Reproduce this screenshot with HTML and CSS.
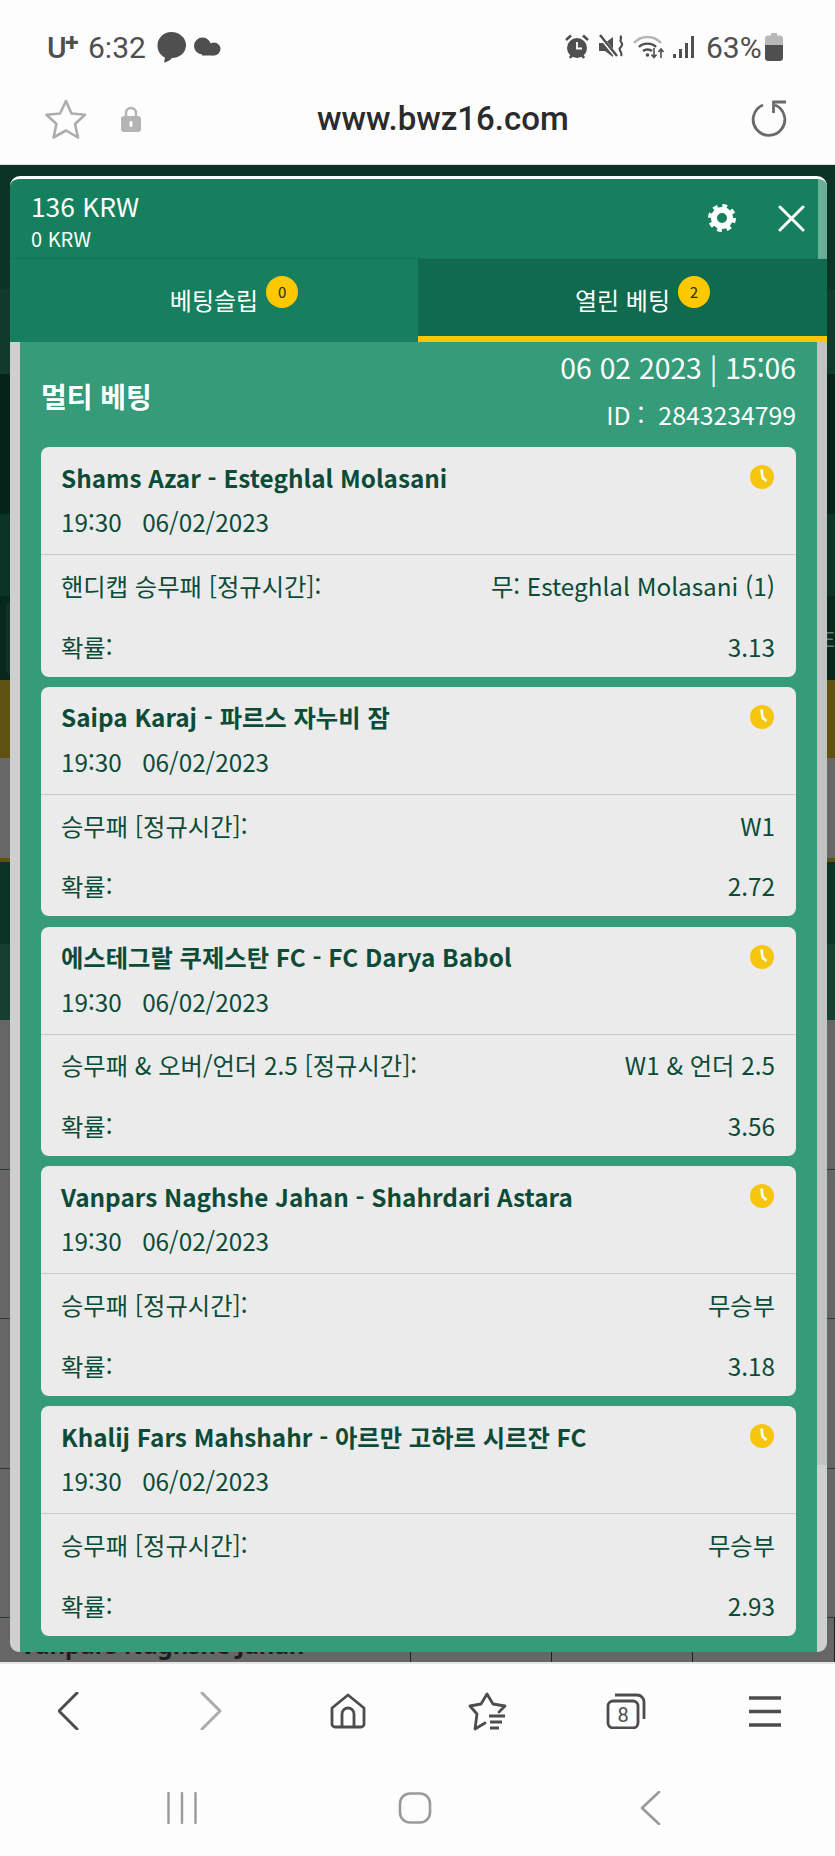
FILE: index.html
```html
<!DOCTYPE html>
<html lang="ko">
<head>
  <meta charset="UTF-8">
  <title>www.bwz16.com</title>
  <link rel="stylesheet" href="styles.css">
</head>
<body>
  <div class="status-bar">
    <div class="status-left">
      <span class="carrier">U<span class="carrier-plus">+</span></span>
      <span class="clock-text">6:32</span>
      <svg width="37" height="34" viewBox="0 0 37 34"><path d="M14.5 2C6.5 2 .5 8 .5 15.5c0 5.500 3 10 7.500 12l-1 5c3-.5 6-2 8-4.500 8 0 14-5.500 14-13C29 8 22.5 2 14.5 2z" fill="#4f4f4f"/></svg>
      <svg width="27" height="22" viewBox="0 0 27 22"><circle cx="8.5" cy="10" r="8.5" fill="#4f4f4f"/><circle cx="20" cy="13" r="6.5" fill="#4f4f4f"/><rect x="8" y="12" width="12" height="7.5" fill="#4f4f4f"/></svg>
    </div>
    <div class="status-right">
      <svg width="34" height="26" viewBox="0 0 34 26">
        <circle cx="12" cy="14" r="10" fill="#4f4f4f"/>
        <path d="M1 6l5-4.500M23 6l-5-4.500M5 24l2-3M19 24l-2-3" stroke="#4f4f4f" stroke-width="2.6" fill="none"/>
        <path d="M12 8v6.500h5" stroke="#fff" stroke-width="1.8" fill="none"/>
      </svg>
      <svg width="34" height="26" viewBox="0 0 34 26">
        <path d="M0 9h6l8-6v20l-8-6H0z" fill="#4f4f4f"/>
        <path d="M1 2l17 21" stroke="#fff" stroke-width="4"/>
        <path d="M1 1l17 21" stroke="#4f4f4f" stroke-width="2.4"/>
        <path d="M21 2c3 2-1 4 1 6s1 4-1 6 3 4 1 8" stroke="#4f4f4f" stroke-width="2.2" fill="none"/>
      </svg>
      <svg width="38" height="26" viewBox="0 0 38 26">
        <path d="M1 9c7-8 20-8 27 0" stroke="#b4b4b4" stroke-width="2.4" fill="none"/>
        <path d="M6 13c4-4.500 13-4.500 17 0M10 17c2.500-2 6.500-2 9 0" stroke="#4f4f4f" stroke-width="2.4" fill="none"/>
        <circle cx="14.5" cy="21" r="1.8" fill="#4f4f4f"/>
        <path d="M21 14v9M18.5 20.5l2.500 3 2.500-3M28 24v-9M25.5 18l2.500-3 2.500 3" stroke="#4f4f4f" stroke-width="1.6" fill="none"/>
      </svg>
      <svg width="35" height="26" viewBox="0 0 35 26">
        <path d="M2 20h3v4H2zM8 15h3v9H8zM14 9h3v15h-3zM20 2h3v22h-3z" fill="#4f4f4f"/>
      </svg>
      <span class="battery-text">63%</span>
      <svg width="18" height="28" viewBox="0 0 18 28">
        <path d="M6 0h6v2.500h3c1.500 0 3 1.200 3 3V12H0V5.500c0-1.800 1.500-3 3-3h3z" fill="#b8b8b8"/>
        <path d="M0 12h18v13c0 1.800-1.500 3-3 3H3c-1.500 0-3-1.200-3-3z" fill="#4f4f4f"/>
      </svg>
    </div>
  </div>

  <div class="url-bar">
    <div class="url-left">
      <svg width="42" height="40" viewBox="0 0 42 40"><path d="M21 2l5.500 12.500 13.500 1.300-10 9.200 3 13.500L21 31.500 8.500 38.500 11.500 25l-10-9.200 13.500-1.300z" fill="none" stroke="#adadad" stroke-width="2.6" stroke-linejoin="round"/></svg>
      <svg width="20" height="26" viewBox="0 0 20 26"><path d="M5 11V7a5 5 0 0 1 10 0v4" fill="none" stroke="#b4b4b4" stroke-width="2.4"/><rect y="10" width="20" height="16" rx="3" fill="#b4b4b4"/><rect x="8.5" y="15" width="3" height="6" rx="1.5" fill="#fff"/></svg>
    </div>
    <div class="url-text">www.bwz16.com</div>
    <svg class="reload" width="38" height="37" viewBox="0 0 38 37"><path d="M13 5A15.800 15.800 0 1 0 25 5" fill="none" stroke="#6a6a6a" stroke-width="2.8"/><path d="M36 2H23.500v11" fill="none" stroke="#6a6a6a" stroke-width="2.8"/></svg>
  </div>

  <div class="viewport">
    <div class="band band-a"></div>
    <div class="band band-b"></div>
    <div class="band band-c"></div>
    <div class="band band-d"></div>
    <div class="band band-e"><div class="band-box"></div><span class="band-letter">E</span></div>
    <div class="band band-f"></div>
    <div class="band band-g"></div>
    <div class="band band-h"></div>
    <div class="band band-i"></div>
    <div class="band band-j"></div>
    <div class="bg-row"></div>
    <div class="bg-row"></div>
    <div class="bg-row"></div>
    <div class="bg-row"></div>
    <div class="bg-row bg-row-last">
      <div class="bg-cell">Vanpars Naghshe Jahan</div>
      <div class="bg-cell"></div>
      <div class="bg-cell"></div>
      <div class="bg-cell"></div>
    </div>

    <div class="modal">
      <div class="modal-top">
        <div class="modal-head">
          <div>
            <div class="balance">136 KRW</div>
            <div class="bonus">0 KRW</div>
          </div>
          <div class="head-icons">
            <svg width="28" height="28" viewBox="0 0 28 28">
              <circle cx="14" cy="14" r="8" fill="none" stroke="#fff" stroke-width="6"/>
              <circle cx="14" cy="14" r="11.5" fill="none" stroke="#fff" stroke-width="5" stroke-dasharray="4.5 4.53"/>
            </svg>
            <svg width="27" height="27" viewBox="0 0 27 27"><path d="M2 2l23 23M25 2L2 25" stroke="#fff" stroke-width="3" stroke-linecap="round"/></svg>
          </div>
        </div>
        <div class="tabs">
          <div class="tab"><span class="tab-label">베팅슬립<span class="tab-badge">0</span></span></div>
          <div class="tab tab-active"><span class="tab-label">열린 베팅<span class="tab-badge">2</span></span></div>
        </div>
      </div>
      <div class="scroll-thumb"></div>
      <div class="content">
        <div class="content-head">
          <h2>멀티 베팅</h2>
          <div class="bet-info">
            <div class="bet-date">06 02 2023 | 15:06</div>
            <div class="bet-id">ID :&nbsp; 2843234799</div>
          </div>
        </div>

        <div class="card">
          <div class="card-top">
            <div class="card-title"><span>Shams Azar - Esteghlal Molasani</span>
              <svg class="clock" width="24" height="24" viewBox="0 0 24 24"><circle cx="12" cy="12" r="12" fill="#f5c60d"/><path d="M11.5 4.5l1 8 4 3.500" fill="none" stroke="#fff" stroke-width="2.6"/></svg>
            </div>
            <div class="card-time">19:30&nbsp;&nbsp; 06/02/2023</div>
          </div>
          <div class="card-row"><span>핸디캡 승무패 [정규시간]:</span><span>무: Esteghlal Molasani (1)</span></div>
          <div class="card-row"><span>확률:</span><span>3.13</span></div>
        </div>

        <div class="card">
          <div class="card-top">
            <div class="card-title"><span>Saipa Karaj - 파르스 자누비 잠</span>
              <svg class="clock" width="24" height="24" viewBox="0 0 24 24"><circle cx="12" cy="12" r="12" fill="#f5c60d"/><path d="M11.5 4.5l1 8 4 3.500" fill="none" stroke="#fff" stroke-width="2.6"/></svg>
            </div>
            <div class="card-time">19:30&nbsp;&nbsp; 06/02/2023</div>
          </div>
          <div class="card-row"><span>승무패 [정규시간]:</span><span>W1</span></div>
          <div class="card-row"><span>확률:</span><span>2.72</span></div>
        </div>

        <div class="card">
          <div class="card-top">
            <div class="card-title"><span>에스테그랄 쿠제스탄 FC - FC Darya Babol</span>
              <svg class="clock" width="24" height="24" viewBox="0 0 24 24"><circle cx="12" cy="12" r="12" fill="#f5c60d"/><path d="M11.5 4.5l1 8 4 3.500" fill="none" stroke="#fff" stroke-width="2.6"/></svg>
            </div>
            <div class="card-time">19:30&nbsp;&nbsp; 06/02/2023</div>
          </div>
          <div class="card-row"><span>승무패 &amp; 오버/언더 2.5 [정규시간]:</span><span>W1 &amp; 언더 2.5</span></div>
          <div class="card-row"><span>확률:</span><span>3.56</span></div>
        </div>

        <div class="card">
          <div class="card-top">
            <div class="card-title"><span>Vanpars Naghshe Jahan - Shahrdari Astara</span>
              <svg class="clock" width="24" height="24" viewBox="0 0 24 24"><circle cx="12" cy="12" r="12" fill="#f5c60d"/><path d="M11.5 4.5l1 8 4 3.500" fill="none" stroke="#fff" stroke-width="2.6"/></svg>
            </div>
            <div class="card-time">19:30&nbsp;&nbsp; 06/02/2023</div>
          </div>
          <div class="card-row"><span>승무패 [정규시간]:</span><span>무승부</span></div>
          <div class="card-row"><span>확률:</span><span>3.18</span></div>
        </div>

        <div class="card">
          <div class="card-top">
            <div class="card-title"><span>Khalij Fars Mahshahr - 아르만 고하르 시르잔 FC</span>
              <svg class="clock" width="24" height="24" viewBox="0 0 24 24"><circle cx="12" cy="12" r="12" fill="#f5c60d"/><path d="M11.5 4.5l1 8 4 3.500" fill="none" stroke="#fff" stroke-width="2.6"/></svg>
            </div>
            <div class="card-time">19:30&nbsp;&nbsp; 06/02/2023</div>
          </div>
          <div class="card-row"><span>승무패 [정규시간]:</span><span>무승부</span></div>
          <div class="card-row"><span>확률:</span><span>2.93</span></div>
        </div>
      </div>
    </div>
  </div>

  <div class="nav-bar">
    <svg width="24" height="38" viewBox="0 0 24 38"><path d="M19 1L1 19l18 18" fill="none" stroke="#4d4d4d" stroke-width="3" stroke-linecap="round" stroke-linejoin="round"/></svg>
    <svg class="nav-forward" width="24" height="38" viewBox="0 0 24 38"><path d="M3 1l18 18L3 37" fill="none" stroke="#ababab" stroke-width="3" stroke-linecap="round" stroke-linejoin="round"/></svg>
    <svg width="36" height="36" viewBox="0 0 36 36"><path d="M2 15L18 2l16 13v16a3 3 0 0 1-3 3H5a3 3 0 0 1-3-3z" fill="none" stroke="#4d4d4d" stroke-width="2.8" stroke-linejoin="round"/><path d="M12 34V21a6 6 0 0 1 12 0v13" fill="none" stroke="#4d4d4d" stroke-width="2.8"/></svg>
    <svg width="40" height="40" viewBox="0 0 40 40"><path d="M32 21l6-6-12-2-6-10-6 10-11 2 7 8-2 15 10-6" fill="none" stroke="#4d4d4d" stroke-width="2.8" stroke-linejoin="round" stroke-linecap="round"/><path d="M22 25h16M23 31h12M23 37h9" stroke="#4d4d4d" stroke-width="3"/></svg>
    <svg width="40" height="36" viewBox="0 0 40 36"><rect x="2" y="8" width="30" height="27" rx="5" fill="none" stroke="#4d4d4d" stroke-width="2.8"/><path d="M9 2h22a7 7 0 0 1 7 7v17" fill="none" stroke="#4d4d4d" stroke-width="2.8"/><text x="17" y="29" text-anchor="middle" class="tab-count">8</text></svg>
    <svg width="32" height="33" viewBox="0 0 32 33"><path d="M0 3h32M0 16.5h32M0 30h32" stroke="#4d4d4d" stroke-width="3.4"/></svg>
  </div>

  <div class="system-bar">
    <svg width="40" height="32" viewBox="0 0 40 32"><path d="M6.5 1v30M20 1v30M33.5 1v30" stroke="#9a9a9a" stroke-width="2.4" stroke-linecap="round"/></svg>
    <svg width="40" height="32" viewBox="0 0 40 32"><rect x="4" y="1.5" width="30" height="29" rx="10" fill="none" stroke="#9a9a9a" stroke-width="2.6"/></svg>
    <svg width="40" height="34" viewBox="0 0 40 34"><path d="M29 1L12 17l17 16" fill="none" stroke="#9a9a9a" stroke-width="2.6" stroke-linecap="round" stroke-linejoin="round"/></svg>
  </div>
</body>
</html>
```

FILE: styles.css
```css
* {
  box-sizing: border-box;
  margin: 0;
  padding: 0;
}

body {
  width: 835px;
  height: 1856px;
  overflow: hidden;
  background: #fdfdfd;
  font-family: "Noto Sans CJK KR", "Noto Sans", sans-serif;
}

svg {
  display: block;
  flex: none;
}

/* phone status bar */
.status-bar {
  height: 84px;
  padding: 10px 52px 0 47px;
  display: flex;
  justify-content: space-between;
  align-items: center;
  font-family: Roboto, sans-serif;
  color: #4f4f4f;
}

.status-left {
  display: flex;
  align-items: center;
}

.status-right {
  display: flex;
  align-items: center;
}

.carrier {
  font-size: 30px;
  font-weight: 500;
  width: 41px;
  position: relative;
}

.carrier-plus {
  font-size: 25px;
  font-weight: 700;
  line-height: 25px;
  position: absolute;
  top: 0;
  left: 18px;
}

.clock-text {
  font-size: 30px;
  width: 69px;
}

.battery-text {
  font-size: 30px;
  width: 59px;
}

/* browser url bar */
.url-bar {
  height: 81px;
  padding: 0 47px 11px 45px;
  display: flex;
  align-items: center;
  justify-content: space-between;
  border-bottom: 1px solid #dedede;
  position: relative;
}

.url-left {
  display: flex;
  align-items: center;
  gap: 34px;
  width: 140px;
}

.url-text {
  font-family: Roboto, sans-serif;
  font-size: 33px;
  font-weight: 500;
  color: #2b2b2b;
  margin-left: 132px;
  flex: 1;
}

/* dimmed site behind the popup */
.viewport {
  height: 1497px;
  position: relative;
  overflow: hidden;
  background: #666;
}

.band-a { height: 124px; background: #0b3326; }
.band-b { height: 85px; background: #0f3a2c; }
.band-c { height: 140px; background: #062219; }
.band-d { height: 82px; background: #0b3326; }
.band-f { height: 78px; background: #5f5110; }
.band-g { height: 100px; background: #686868; }
.band-h { height: 4px; background: #5f5110; }
.band-i { height: 82px; background: #0b3326; }
.band-j { height: 76px; background: #15402f; }

.band-e {
  height: 84px;
  background: #08271d;
  padding: 5px 0 5px 6px;
  display: flex;
  justify-content: space-between;
  align-items: center;
  color: #6c7a75;
}

.band-box {
  width: 20px;
  height: 74px;
  background: #0f3328;
  border-radius: 6px;
}

.band-letter {
  font-size: 20px;
}

.bg-row {
  height: 149.5px;
  background: #666;
  border-bottom: 1px solid #1e4034;
}

.bg-row-last {
  height: 50px;
  border: 0;
  display: grid;
  grid-template-columns: 411px 141px 141px 142px;
}

.bg-cell {
  padding: 11px 0 0 20px;
  font-family: "Noto Sans", sans-serif;
  font-size: 24px;
  font-weight: 700;
  line-height: 32px;
  color: #1c1c1c;
  border-right: 1px solid #1e1e1e;
}

/* popup */
.modal {
  position: absolute;
  left: 10px;
  top: 11px;
  width: 817px;
  height: 1476px;
  background: #cfcfcf;
  border-top: 3px solid #fff;
  border-radius: 10px 10px 9px 9px;
  overflow: hidden;
}

.modal-top {
  position: relative;
  background: #16805e;
}

/* scrollbar track lying over the green header */
.modal-top::after {
  content: "";
  position: absolute;
  top: 0;
  right: 0;
  bottom: 6px;
  width: 9px;
  background: rgba(255, 255, 255, 0.36);
}

.scroll-thumb {
  position: absolute;
  top: 163px;
  right: 0;
  width: 10px;
  height: 1123px;
  background: #c2c2c2;
}

.modal-head {
  height: 80px;
  padding: 10px 22px 0 21px;
  display: flex;
  justify-content: space-between;
  color: #fff;
  border-bottom: 1px solid #137557;
}

.balance {
  font-size: 26.3px;
  line-height: 34px;
}

.bonus {
  font-size: 20px;
  line-height: 32px;
}

.head-icons {
  display: flex;
  align-items: center;
  gap: 42px;
  height: 58px;
}

.tabs {
  display: flex;
  height: 83px;
}

.tab {
  width: 408px;
  display: flex;
  justify-content: center;
  color: #fff;
  font-size: 24px;
  line-height: 32px;
  padding-top: 25px;
}

.tab-active {
  width: 409px;
  background: #106a4e;
  border-bottom: 6px solid #fdc800;
  position: relative;
  z-index: 1;
}

.tab-label {
  position: relative;
  height: 32px;
}

.tab-badge {
  position: absolute;
  left: 100%;
  top: -8px;
  width: 32px;
  height: 32px;
  margin-left: 8px;
  border-radius: 50%;
  background: #fdc800;
  color: #2b2b10;
  font-size: 15px;
  text-align: center;
}

.content {
  margin: 0 10px;
  width: 797px;
  height: 1310px;
  padding: 0 21px;
  background: #359b78;
  position: relative;
  overflow: hidden;
}

.content-head {
  height: 105px;
  display: flex;
  justify-content: space-between;
  color: #fff;
}

.content-head h2 {
  font-size: 28px;
  font-weight: 700;
  line-height: 40px;
  margin-top: 34px;
}

.bet-info {
  text-align: right;
  padding-top: 3px;
}

.bet-date {
  font-size: 28.3px;
  line-height: 44px;
  height: 51px;
}

.bet-id {
  font-size: 24.8px;
  line-height: 36px;
}

.card {
  height: 229.5px;
  margin-bottom: 10.25px;
  background: #ebebeb;
  border-radius: 8px;
  color: #0b4b38;
  overflow: hidden;
}

.card-top {
  height: 108px;
  padding: 10px 22px 0 20px;
  border-bottom: 1px solid #cacaca;
}

.card-title {
  height: 40px;
  display: flex;
  justify-content: space-between;
  align-items: center;
  font-size: 24.3px;
  font-weight: 700;
}

.card-time {
  font-size: 24.3px;
  line-height: 50px;
}

.card-row {
  height: 60.75px;
  padding: 0 21px 0 20px;
  display: flex;
  justify-content: space-between;
  align-items: center;
  font-size: 24.3px;
}

/* browser bottom nav */
.nav-bar {
  height: 96px;
  display: grid;
  grid-template-columns: repeat(6, 1fr);
  justify-items: center;
  align-items: center;
  border-top: 2px solid #e6e6e6;
}

.nav-forward {
  margin-left: 4px;
}

.tab-count {
  font-family: Roboto, sans-serif;
  font-size: 20px;
  fill: #4d4d4d;
}

.system-bar {
  height: 98px;
  padding: 2px 4px 0 0;
  display: flex;
  justify-content: center;
  align-items: center;
  gap: 194px;
}
```
